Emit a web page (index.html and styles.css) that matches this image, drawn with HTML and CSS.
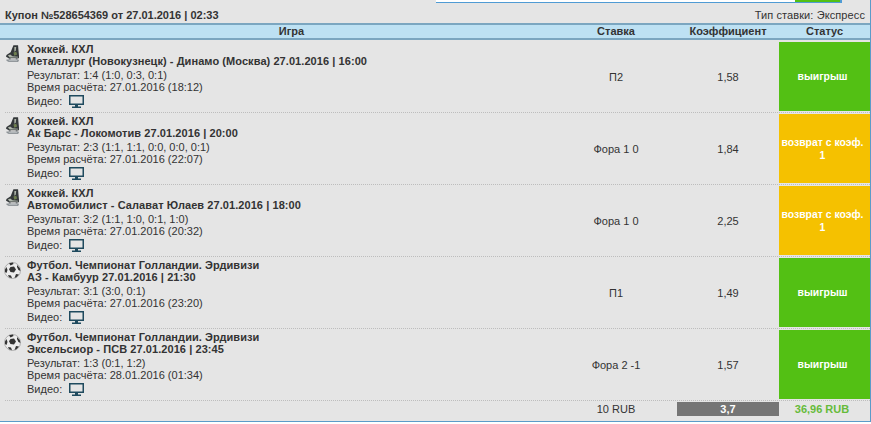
FILE: index.html
```html
<!DOCTYPE html>
<html lang="ru">
<head>
<meta charset="utf-8">
<title>Купон</title>
<link rel="stylesheet" href="styles.css">
</head>
<body>
<svg class="defs" width="0" height="0" aria-hidden="true">
  <defs>
    <symbol id="monitor" viewBox="0 0 15 13">
      <path fill="#1f4a5e" fill-rule="evenodd" d="M0 0h15v10H9v1.500h3V13H3v-1.500h3V10H0zM1.500 1.500v7h12v-7z"/>
    </symbol>
    <symbol id="skate" viewBox="0 0 14 19">
      <path fill="#34383a" d="M8 0h5l.5 6 .5 5v3H3L0 12.500l.5-2L5 7.500z"/>
      <path fill="#aeb6aa" d="M9 2h2l-.5 4-1.500 1zM2 11l2.500-1 2.500 2 6 .5v.8H4z"/>
      <path fill="#6f8050" d="M8 8l3-1 1 3-3 1.500z"/>
      <path fill="#5c6265" d="M3 14h2v1.500H3zM10.500 14h2v1.500h-2z"/>
      <path fill="#8f9599" d="M.5 15.500h13l.5 1-1 1.500-10 0-2.500-1.200z"/>
      <path fill="#d5d9db" d="M3 16.500h9v.6H3z"/>
    </symbol>
    <symbol id="ball" viewBox="0 0 17 17">
      <circle cx="8.500" cy="8.500" r="8" fill="#ececec" stroke="#8a8a8a" stroke-width=".6"/>
      <path fill="#333" d="M6.500 5l3.500-.5 2 3-2 3-3.500-.5-1.500-2.700zM1 7.500l1.500-2.500 1 3-1 3-1.500-1zM5 1.200l4-.6.5 1.400-3 1.500zM13 3l2.800 3 .6 3-2-1-1.400-3zM4 13l3 .5 1 2.800-3-1zM12 12l3 .5-2.500 2.700-2 .8z"/>
    </symbol>
  </defs>
</svg>
<main class="coupon">
  <div class="strip"><div class="tab"><span class="tab-btn"></span></div></div>
  <div class="title-bar">
    <strong>Купон №528654369 от 27.01.2016 | 02:33</strong>
    <span>Тип ставки: Экспресс</span>
  </div>
  <div class="grid head">
    <div class="game-head">Игра</div>
    <div>Ставка</div>
    <div>Коэффициент</div>
    <div>Статус</div>
  </div>

  <div class="grid row">
    <svg class="sport skate"><use href="#skate"/></svg>
    <div class="game">
      <b>Хоккей. КХЛ</b>
      <b>Металлург (Новокузнецк) - Динамо (Москва) 27.01.2016 | 16:00</b>
      <p class="first">Результат: 1:4 (1:0, 0:3, 0:1)</p>
      <p>Время расчёта: 27.01.2016 (18:12)</p>
      <p class="video">Видео: <svg class="monitor"><use href="#monitor"/></svg></p>
    </div>
    <div class="cell">П2</div>
    <div class="cell">1,58</div>
    <div class="status win">выигрыш</div>
    <div class="sep"></div>
  </div>

  <div class="grid row">
    <svg class="sport skate"><use href="#skate"/></svg>
    <div class="game">
      <b>Хоккей. КХЛ</b>
      <b>Ак Барс - Локомотив 27.01.2016 | 20:00</b>
      <p class="first">Результат: 2:3 (1:1, 1:1, 0:0, 0:0, 0:1)</p>
      <p>Время расчёта: 27.01.2016 (22:07)</p>
      <p class="video">Видео: <svg class="monitor"><use href="#monitor"/></svg></p>
    </div>
    <div class="cell">Фора 1 0</div>
    <div class="cell">1,84</div>
    <div class="status back">возврат с коэф. 1</div>
    <div class="sep"></div>
  </div>

  <div class="grid row">
    <svg class="sport skate"><use href="#skate"/></svg>
    <div class="game">
      <b>Хоккей. КХЛ</b>
      <b>Автомобилист - Салават Юлаев 27.01.2016 | 18:00</b>
      <p class="first">Результат: 3:2 (1:1, 1:0, 0:1, 1:0)</p>
      <p>Время расчёта: 27.01.2016 (20:32)</p>
      <p class="video">Видео: <svg class="monitor"><use href="#monitor"/></svg></p>
    </div>
    <div class="cell">Фора 1 0</div>
    <div class="cell">2,25</div>
    <div class="status back">возврат с коэф. 1</div>
    <div class="sep"></div>
  </div>

  <div class="grid row">
    <svg class="sport ball"><use href="#ball"/></svg>
    <div class="game">
      <b>Футбол. Чемпионат Голландии. Эрдивизи</b>
      <b>АЗ - Камбуур 27.01.2016 | 21:30</b>
      <p class="first">Результат: 3:1 (3:0, 0:1)</p>
      <p>Время расчёта: 27.01.2016 (23:20)</p>
      <p class="video">Видео: <svg class="monitor"><use href="#monitor"/></svg></p>
    </div>
    <div class="cell">П1</div>
    <div class="cell">1,49</div>
    <div class="status win">выигрыш</div>
    <div class="sep"></div>
  </div>

  <div class="grid row">
    <svg class="sport ball"><use href="#ball"/></svg>
    <div class="game">
      <b>Футбол. Чемпионат Голландии. Эрдивизи</b>
      <b>Эксельсиор - ПСВ 27.01.2016 | 23:45</b>
      <p class="first">Результат: 1:3 (0:1, 1:2)</p>
      <p>Время расчёта: 28.01.2016 (01:34)</p>
      <p class="video">Видео: <svg class="monitor"><use href="#monitor"/></svg></p>
    </div>
    <div class="cell">Фора 2 -1</div>
    <div class="cell">1,57</div>
    <div class="status win">выигрыш</div>
    <div class="sep"></div>
  </div>

  <div class="grid foot">
    <div></div>
    <div class="foot-cell">10 RUB</div>
    <div class="foot-cell total">3,7</div>
    <div class="foot-cell payout">36,96 RUB</div>
  </div>
</main>
</body>
</html>
```
FILE: styles.css
```css
* { box-sizing: border-box; }
html, body { margin: 0; padding: 0; background: #fff; }
body { font: 11px/12px "Liberation Sans", Arial, sans-serif; color: #333; }
.defs { position: absolute; }
p { margin: 0; }
b { display: block; font-weight: 700; letter-spacing: .07px; }

.coupon {
  width: 871px;
  height: 422px;
  background: #e5e5e5;
  border-right: 1px solid #5b9bc9;
  border-bottom: 1px solid #5b9bc9;
}
.strip { height: 3px; display: flex; justify-content: flex-end; padding-right: 28px; }
.tab {
  width: 406px;
  background: #fff;
  border-right: 2px solid #4f9bd4;
  border-bottom: 1px solid #4f9bd4;
  display: flex;
  justify-content: flex-end;
}
.tab-btn { width: 45px; height: 2px; background: #53c014; }

.title-bar {
  height: 20px;
  padding: 6px 5px 0 5px;
  display: flex;
  justify-content: space-between;
  line-height: 13px;
}
.title-bar strong { font-weight: 700; }
.title-bar span { letter-spacing: .1px; }

.grid { display: grid; grid-template-columns: 27px 528px 122px 102px 91px; }
.head {
  height: 17px;
  background: #bde1f3;
  border-top: 2px solid #7ba6c0;
  border-bottom: 2px solid #7ba6c0;
  font-weight: 700;
  line-height: 13px;
  text-align: center;
  margin-bottom: 1px;
  grid-template-columns: 555px 122px 102px 91px;
}
.game-head { padding-left: 28px; }

.row { height: 72px; padding-top: 1px; grid-template-rows: 69px 1px; row-gap: 1px; }
.sport { display: block; }
.skate { width: 13px; height: 18px; margin: 3px 0 0 6px; }
.ball { width: 17px; height: 17px; margin: 4px 0 0 4px; }
.game { padding-top: 1px; }
.first { margin-top: 2px; }
.video { margin-top: 1px; display: flex; align-items: center; gap: 7px; height: 14px; }
.monitor { width: 15px; height: 13px; display: block; }
.cell { display: flex; align-items: center; justify-content: center; }
.status {
  display: flex;
  align-items: center;
  justify-content: center;
  text-align: center;
  color: #fff;
  font-weight: 700;
  font-size: 10.400px;
  line-height: 13px;
  padding: 0 4px 0 0;
}
.win { background: #53c014; }
.back { background: #f5c100; }
.sep { grid-column: 1 / -1; margin: 0 0 0 5px; border-top: 1px dotted #bdbdbd; }

.foot { margin-top: 1px; height: 14px; grid-template-columns: 555px 122px 102px 91px; }
.foot-cell { text-align: center; line-height: 14px; }
.total { background: #757575; color: #fff; font-weight: 700; }
.payout { color: #66bb3a; font-weight: 700; padding-right: 5px; }
```
